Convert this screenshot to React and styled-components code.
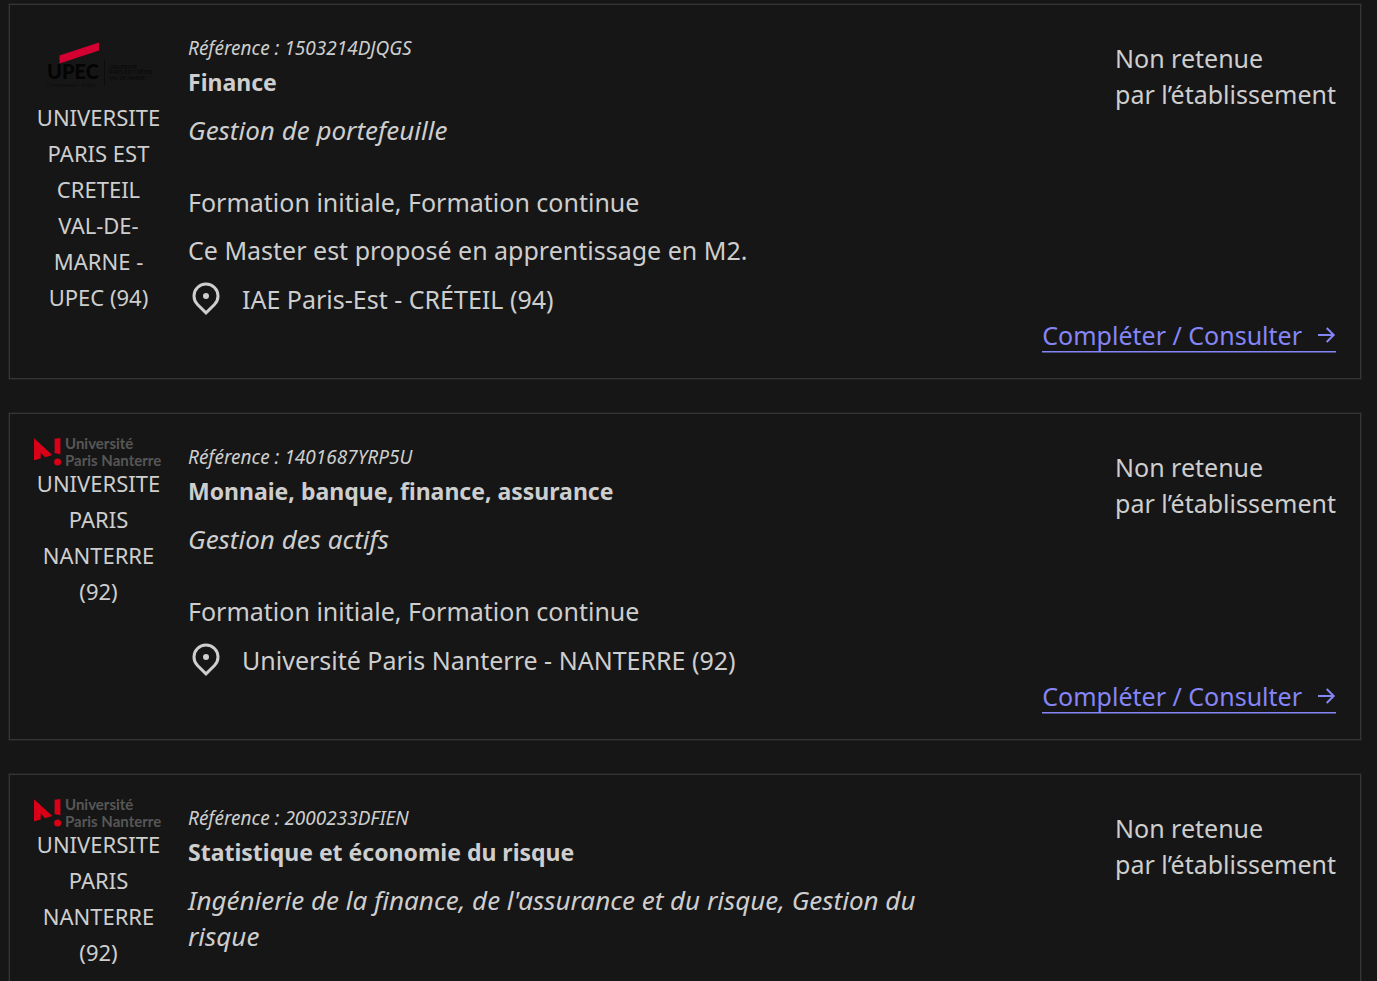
import React from "react";
import styled, { createGlobalStyle } from "styled-components";

const GlobalStyle = createGlobalStyle`
  *, *::before, *::after { box-sizing: border-box; }
  body {
    margin: 0;
    background: #161616;
    color: #cecece;
    font: 25px/36px "Noto Sans", "Open Sans", sans-serif;
  }
  h2, p { margin: 0; }
`;

const List = styled.main`
  display: flex;
  flex-direction: column;
  gap: 34px;
  padding: 4px 16px 34px 9px;
`;

const Card = styled.article`
  display: flex;
  flex-direction: column;
  min-height: 327px;
  padding: 24px 24px 24px 23px;
  border: 1px solid #353535;
  box-shadow: 0 0 0 1px #202020;
`;

const CardBody = styled.div`
  display: grid;
  grid-template-columns: 131px minmax(0, 1fr) auto;
  gap: 24px;
`;

const School = styled.div`
  display: flex;
  flex-direction: column;
  font-size: 22px;
  text-align: center;

  svg { display: block; width: 100%; }
`;

const Details = styled.div`
  max-width: 740px;
  padding-top: 3px;
`;

const Reference = styled.p`
  font-size: 19px;
  line-height: 32px;
  font-style: italic;
`;

const Title = styled.h2`
  font-size: 23px;
  line-height: 36px;
  font-weight: 700;
`;

const Track = styled.p`
  margin-top: 12px;
  font-size: 26px;
  font-style: italic;
`;

const Modes = styled.p`
  margin-top: 36px;
`;

const Note = styled.p`
  margin-top: 12px;
`;

const Place = styled.p`
  display: flex;
  align-items: center;
  gap: 18px;
  margin-top: 13px;

  svg { flex: none; }
`;

const Status = styled.p`
  padding-top: 11px;
  white-space: nowrap;
`;

const CardFooter = styled.footer`
  display: flex;
  justify-content: flex-end;
`;

const MoreLink = styled.a`
  display: flex;
  align-items: center;
  gap: 16px;
  height: 35px;
  padding-top: 1px;
  margin-bottom: 2px;
  color: #8585f6;
  text-decoration: none;
  border-bottom: 1px solid #8585f6;
  box-shadow: 0 1px #4e4e88;
`;

const PinIcon = () => (
  <svg width="36" height="36" viewBox="0 1 24 24" fill="#cecece" aria-hidden="true">
    <path d="M12 20.9l4.95-4.95a7 7 0 1 0-9.9 0L12 20.9zm0 2.83l-6.36-6.37a9 9 0 1 1 12.72 0L12 23.73zM12 13a2 2 0 1 1 0-4 2 2 0 0 1 0 4z" />
  </svg>
);

const ArrowIcon = () => (
  <svg width="18" height="18" viewBox="0 0 18 18" fill="none" stroke="#8585f6" strokeWidth="2" aria-hidden="true">
    <path d="M0 9h15.5M8.7 2l7 7-7 7" />
  </svg>
);

const UpecLogo = () => (
  <svg height="70" viewBox="0 0 131 70" role="img" aria-label="UPEC">
    <path d="M26.5 26.5 66 13.5v8L26.5 34.5z" fill="#d50032" />
    <text x="14" y="50" fontSize="20" fontWeight="900" fontFamily="Lato, sans-serif" fill="#040404">UPEC</text>
    <path d="M71.5 30v27" stroke="#0d0d0d" />
    <g fill="#060606" fontSize="5" fontFamily="Lato, sans-serif">
      <text x="76" y="40">UNIVERSITÉ</text>
      <text x="76" y="45">PARIS-EST CRÉTEIL</text>
      <text x="76" y="51">VAL DE MARNE</text>
    </g>
    <text x="14" y="58" fontSize="5" fontFamily="Lato, sans-serif" fill="#0d0d0d">Connaissance - Action</text>
  </svg>
);

const NanterreLogo = () => (
  <svg height="27" viewBox="0 0 131 27" overflow="visible" role="img" aria-label="Université Paris Nanterre">
    <g fill="#d90018">
      <path d="M1 0.3 19.3 17 12 19.3 7.7 14.4v6L1 22.2z" />
      <path d="M21.6 0.8 27.4 0v16.2L21.6 15z" />
      <circle cx="24.6" cy="24" r="3.5" />
    </g>
    <g fill="#575756" fontSize="15" fontWeight="700" fontFamily="Lato, sans-serif">
      <text x="32" y="11">Université</text>
      <text x="32" y="28">Paris Nanterre</text>
    </g>
  </svg>
);

const programmes = [
  {
    Logo: UpecLogo,
    school: "UNIVERSITE PARIS EST CRETEIL VAL-DE-MARNE - UPEC (94)",
    reference: "1503214DJQGS",
    title: "Finance",
    track: "Gestion de portefeuille",
    modes: "Formation initiale, Formation continue",
    note: "Ce Master est proposé en apprentissage en M2.",
    place: "IAE Paris-Est - CRÉTEIL (94)",
  },
  {
    Logo: NanterreLogo,
    school: "UNIVERSITE PARIS NANTERRE (92)",
    reference: "1401687YRP5U",
    title: "Monnaie, banque, finance, assurance",
    track: "Gestion des actifs",
    modes: "Formation initiale, Formation continue",
    place: "Université Paris Nanterre - NANTERRE (92)",
  },
  {
    Logo: NanterreLogo,
    school: "UNIVERSITE PARIS NANTERRE (92)",
    reference: "2000233DFIEN",
    title: "Statistique et économie du risque",
    track: "Ingénierie de la finance, de l'assurance et du risque, Gestion du risque",
  },
];

function ProgrammeCard({ Logo, school, reference, title, track, modes, note, place }) {
  return (
    <Card>
      <CardBody>
        <School>
          <Logo />
          <p>{school}</p>
        </School>
        <Details>
          <Reference>Référence : {reference}</Reference>
          <Title>{title}</Title>
          <Track>{track}</Track>
          {modes && <Modes>{modes}</Modes>}
          {note && <Note>{note}</Note>}
          {place && (
            <Place>
              <PinIcon />
              {place}
            </Place>
          )}
        </Details>
        <Status>
          Non retenue
          <br />
          par l’établissement
        </Status>
      </CardBody>
      {place && (
        <CardFooter>
          <MoreLink href="#">
            Compléter / Consulter
            <ArrowIcon />
          </MoreLink>
        </CardFooter>
      )}
    </Card>
  );
}

export default function App() {
  return (
    <>
      <GlobalStyle />
      <List>
        {programmes.map((programme) => (
          <ProgrammeCard key={programme.reference} {...programme} />
        ))}
      </List>
    </>
  );
}
